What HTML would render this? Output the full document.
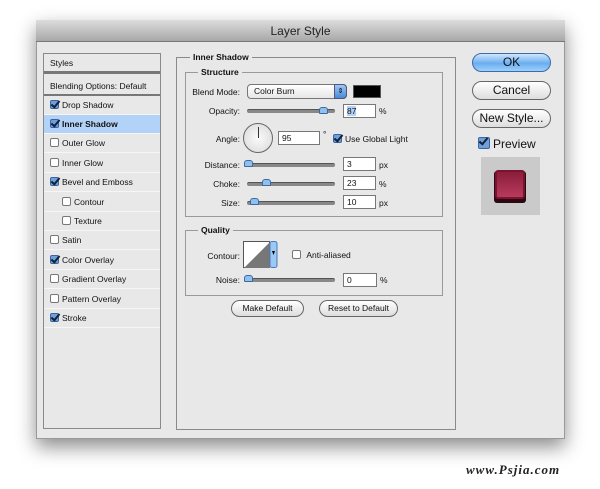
<!DOCTYPE html>
<html><head><style>
*{margin:0;padding:0;box-sizing:border-box}
body{width:600px;height:489px;background:#fff;position:relative;overflow:hidden;font-family:"Liberation Sans",sans-serif;font-size:8.5px;color:#111}
.a{position:absolute}
#dlg{left:36px;top:20px;width:529px;height:419px;background:#e8e8e8;border:1px solid #999;box-shadow:0 8px 18px rgba(0,0,0,.45)}
#title{left:36px;top:20px;width:529px;height:22px;background:linear-gradient(#dcdcdc,#a8a8a8);border-bottom:1px solid #777;text-align:center;font-size:12px;line-height:22px;color:#222}
.box{border:1px solid #8a8a8a}
.row{position:absolute;left:44px;width:116px;height:19px;border-bottom:1px solid #f6f6f6;line-height:18px;padding-left:6px;font-size:8.5px}
.cb{display:inline-block;width:9px;height:9px;border:1px solid #777;border-radius:2px;background:#fff;vertical-align:-1px;margin-right:3px;position:relative}
.cb.on{background:#6fa0dd;border-color:#3a64a0}
.cb.on:after{content:"";position:absolute;left:2px;top:-2px;width:3px;height:7px;border:solid #123;border-width:0 2px 2px 0;transform:rotate(40deg)}
.lbl{position:absolute;text-align:right;width:80px;left:160px}
.sl{position:absolute;height:4px;background:#888;border-radius:2px;border-top:1px solid #555}
.th{position:absolute;width:9px;height:7px;background:#8fc0f0;border:1px solid #3a6aa0;border-radius:3px 3px 1px 1px}
.in{position:absolute;background:#fff;border:1px solid #777;height:14px;padding-left:3px;line-height:12px}
.btn{position:absolute;border:1px solid #666;border-radius:10px;background:linear-gradient(#fff,#ddd);text-align:center}
.leg{position:absolute;background:#e8e8e8;padding:0 3px;font-weight:bold}
</style></head><body>
<div id="dlg" class="a"></div>
<div id="title" class="a">Layer Style</div>

<div class="a box" style="left:43px;top:53px;width:118px;height:376px;background:#e8e8e8"></div>
<div class="row" style="top:54px;height:20px;border-bottom:3px solid #777">Styles</div>
<div class="row" style="top:77px;border-bottom:2px solid #777">Blending Options: Default</div>
<div class="row" style="top:96px"><span class="cb on"></span>Drop Shadow</div>
<div class="row" style="top:115px;background:#b3d2f7;font-weight:bold"><span class="cb on"></span>Inner Shadow</div>
<div class="row" style="top:134px"><span class="cb"></span>Outer Glow</div>
<div class="row" style="top:154px"><span class="cb"></span>Inner Glow</div>
<div class="row" style="top:173px"><span class="cb on"></span>Bevel and Emboss</div>
<div class="row" style="top:193px;padding-left:18px"><span class="cb"></span>Contour</div>
<div class="row" style="top:212px;padding-left:18px"><span class="cb"></span>Texture</div>
<div class="row" style="top:231px"><span class="cb"></span>Satin</div>
<div class="row" style="top:251px"><span class="cb on"></span>Color Overlay</div>
<div class="row" style="top:270px"><span class="cb"></span>Gradient Overlay</div>
<div class="row" style="top:290px"><span class="cb"></span>Pattern Overlay</div>
<div class="row" style="top:309px"><span class="cb on"></span>Stroke</div>

<div class="a box" style="left:176px;top:57px;width:280px;height:373px"></div>
<div class="leg" style="left:190px;top:52px">Inner Shadow</div>
<div class="a box" style="left:185px;top:72px;width:258px;height:145px;border-color:#999"></div>
<div class="leg" style="left:198px;top:67px">Structure</div>

<div class="lbl" style="top:87px">Blend Mode:</div>
<div class="a" style="left:247px;top:84px;width:100px;height:15px;border:1px solid #777;border-radius:4px;background:linear-gradient(#fff,#e6e6e6);padding-left:6px;line-height:13px">Color Burn</div>
<div class="a" style="left:334px;top:84px;width:13px;height:15px;border-radius:0 4px 4px 0;background:linear-gradient(#9cc8f4,#4a8ad8);border:1px solid #557;color:#000;font-size:7px;text-align:center;line-height:13px">&#8661;</div>
<div class="a" style="left:353px;top:85px;width:28px;height:13px;background:#000;border:1px solid #555"></div>

<div class="lbl" style="top:106px">Opacity:</div>
<div class="sl" style="left:247px;top:109px;width:88px"></div><div class="th" style="left:319px;top:107px"></div>
<div class="in" style="left:343px;top:104px;width:33px"><span style="background:#b3d2f7">87</span></div><div class="a" style="left:379px;top:106px">%</div>

<div class="lbl" style="top:134px">Angle:</div>
<div class="a" style="left:243px;top:123px;width:30px;height:30px;border-radius:50%;border:1px solid #666;background:radial-gradient(#fafafa,#d8d8d8)"></div>
<div class="a" style="left:258px;top:127px;width:1px;height:11px;background:#333"></div>
<div class="in" style="left:278px;top:131px;width:42px">95</div><div class="a" style="left:323px;top:129px">°</div>
<div class="a" style="left:333px;top:134px"><span class="cb on"></span>Use Global Light</div>

<div class="lbl" style="top:160px">Distance:</div>
<div class="sl" style="left:247px;top:163px;width:88px"></div><div class="th" style="left:244px;top:160px"></div>
<div class="in" style="left:343px;top:157px;width:33px">3</div><div class="a" style="left:379px;top:160px">px</div>
<div class="lbl" style="top:179px">Choke:</div>
<div class="sl" style="left:247px;top:182px;width:88px"></div><div class="th" style="left:262px;top:179px"></div>
<div class="in" style="left:343px;top:176px;width:33px">23</div><div class="a" style="left:379px;top:179px">%</div>
<div class="lbl" style="top:198px">Size:</div>
<div class="sl" style="left:247px;top:201px;width:88px"></div><div class="th" style="left:250px;top:198px"></div>
<div class="in" style="left:343px;top:195px;width:33px">10</div><div class="a" style="left:379px;top:198px">px</div>

<div class="a box" style="left:185px;top:230px;width:258px;height:66px;border-color:#999"></div>
<div class="leg" style="left:198px;top:225px">Quality</div>
<div class="lbl" style="top:251px">Contour:</div>
<svg class="a" style="left:243px;top:241px" width="35" height="28"><rect x="0.5" y="0.5" width="26" height="26" fill="#fff" stroke="#555"/><path d="M1 27L27 1V27Z" fill="#777"/><rect x="27" y="0.5" width="7" height="26" rx="2" fill="#9cc8f4" stroke="#4a7ab8"/><path d="M29 10h3l-1.5 4z" fill="#000"/></svg>
<div class="a" style="left:292px;top:250px"><span class="cb"></span>&nbsp;Anti-aliased</div>
<div class="lbl" style="top:275px">Noise:</div>
<div class="sl" style="left:247px;top:278px;width:88px"></div><div class="th" style="left:244px;top:275px"></div>
<div class="in" style="left:343px;top:273px;width:34px">0</div><div class="a" style="left:380px;top:275px">%</div>

<div class="btn" style="left:231px;top:300px;width:73px;height:17px;line-height:15px">Make Default</div>
<div class="btn" style="left:319px;top:300px;width:79px;height:17px;line-height:15px">Reset to Default</div>

<div class="btn" style="left:472px;top:53px;width:79px;height:19px;line-height:17px;font-size:12px;background:linear-gradient(#cfe6fd,#6aaef0 55%,#9fd0fb);border-color:#3d6aa8">OK</div>
<div class="btn" style="left:472px;top:81px;width:79px;height:19px;line-height:17px;font-size:12px">Cancel</div>
<div class="btn" style="left:472px;top:109px;width:79px;height:19px;line-height:17px;font-size:12px">New Style...</div>
<div class="a" style="left:478px;top:137px;font-size:12px"><span class="cb on" style="width:12px;height:12px"></span>Preview</div>
<div class="a" style="left:481px;top:157px;width:59px;height:58px;background:#cacaca"></div>
<div class="a" style="left:494px;top:171px;width:32px;height:32px;background:#2a0a10;border-radius:3px"></div>
<div class="a" style="left:495px;top:170px;width:30px;height:29px;background:linear-gradient(#8a1d3a,#b83a5c);border:2px solid #7a1230;border-radius:3px"></div>

<div class="a" style="left:466px;top:462px;font-family:'Liberation Serif',serif;font-style:italic;font-weight:bold;font-size:13px;letter-spacing:1px;color:#222">www.Psjia.com</div>
</body></html>
